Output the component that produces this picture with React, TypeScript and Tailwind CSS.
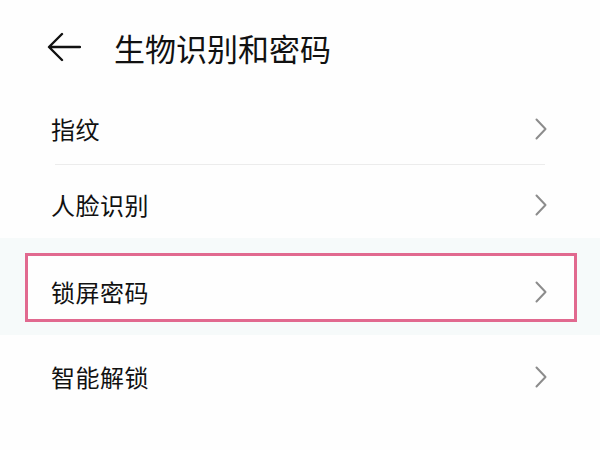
import React from 'react'

const Chevron: React.FC = () => (
  <svg width="12" height="22" viewBox="0 0 12 22" fill="none" className="shrink-0">
    <path d="M1.5 1.5 L10.5 11 L1.5 20.5" stroke="#8c8c8c" strokeWidth="2" strokeLinecap="round" strokeLinejoin="round" />
  </svg>
)

interface RowProps {
  label: string
  className?: string
}

const Row: React.FC<RowProps> = ({ label, className }) => (
  <div className={`flex items-center justify-between ${className ?? ''}`}>
    <span className="text-[24px] leading-none tracking-[0.5px] text-[#111]">{label}</span>
    <Chevron />
  </div>
)

export default function App() {
  return (
    <div
      className="w-[600px] h-[450px] bg-[#fefefe] overflow-hidden"
      style={{ fontFamily: '"Noto Sans CJK SC", "Noto Sans", sans-serif' }}
    >
      <div className="h-[94px] flex items-center pl-[47px]">
        <svg width="34" height="30" viewBox="0 0 34 30" fill="none">
          <path d="M33 15 H3 M15 2 L2 15 L15 28" stroke="#111" strokeWidth="2.4" strokeLinecap="round" strokeLinejoin="round" />
        </svg>
        <span className="ml-[33px] text-[31px] leading-none text-[#111]">生物识别和密码</span>
      </div>

      <Row label="指纹" className="h-[70px] pl-[51px] pr-[53px]" />
      <div className="mx-[55px] h-px bg-[#ececec]" />
      <Row label="人脸识别" className="h-[73px] pl-[51px] pr-[53px] pt-[6px]" />

      <div className="bg-[#f6fafa] pt-[15px] pb-[13px] px-[25px] w-[600px]">
        <div className="h-[69px] w-[552px] border-[3px] border-[#e1698f] bg-[#fefefe] pl-[23px] pr-[27px] pt-[8px] flex items-center justify-between">
          <span className="text-[24px] leading-none tracking-[0.5px] text-[#111]">锁屏密码</span>
          <Chevron />
        </div>
      </div>

      <Row label="智能解锁" className="h-[84px] pl-[51px] pr-[53px]" />
    </div>
  )
}
